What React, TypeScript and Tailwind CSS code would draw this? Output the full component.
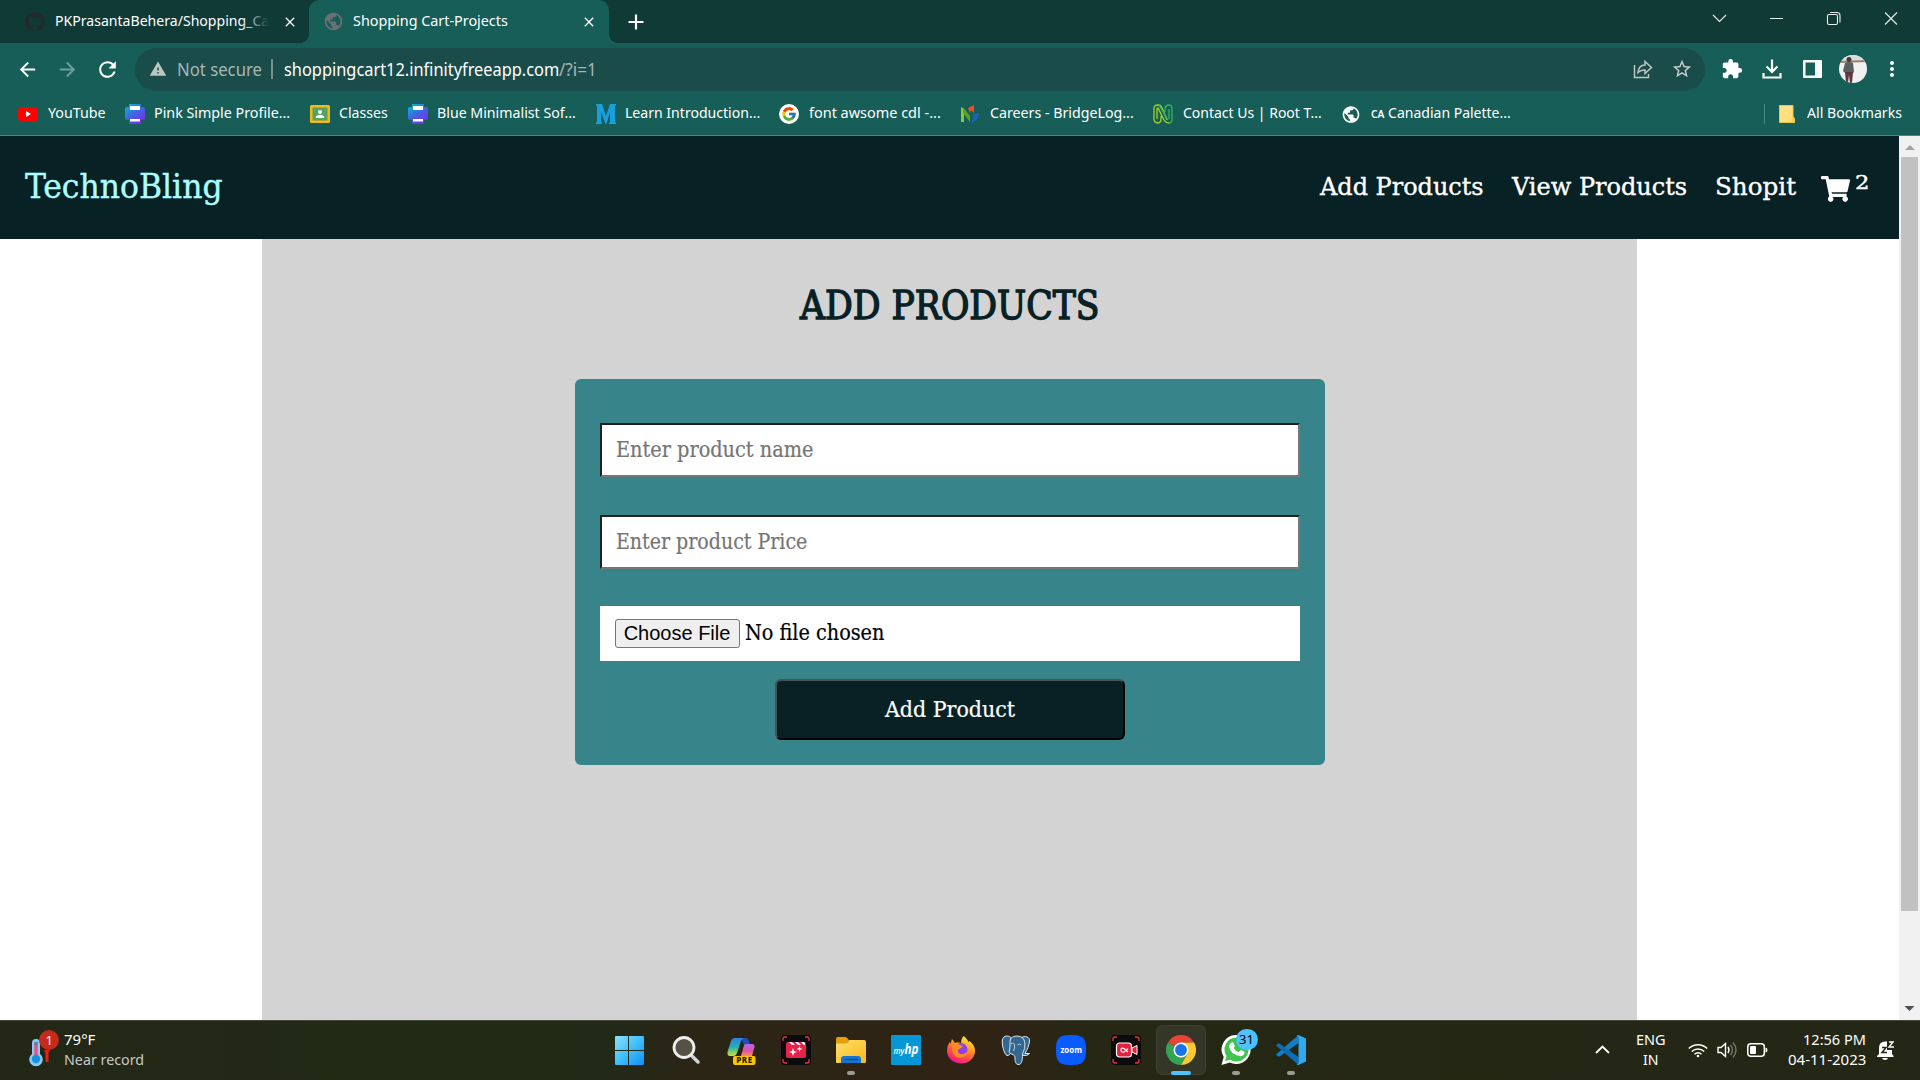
import { useLayoutEffect, useRef, type ReactNode } from "react";
import { FaGithub, FaShoppingCart } from "react-icons/fa";
import { FcGoogle } from "react-icons/fc";
import {
  MdArrowBack,
  MdArrowForward,
  MdClose,
  MdExtension,
  MdMoreVert,
  MdOutlineStarBorder,
  MdPublic,
  MdRefresh,
  MdWarning,
} from "react-icons/md";

/* One line of text whose glyphs are condensed or widened to fill its box. */
function Fit({ className, children }: { className: string; children: ReactNode }) {
  const ref = useRef<HTMLSpanElement>(null);
  useLayoutEffect(() => {
    const el = ref.current;
    if (!el || !el.parentElement) return;
    el.style.transform = `scaleX(${el.parentElement.clientWidth / el.offsetWidth})`;
  }, []);
  return (
    <span className={`block shrink-0 whitespace-nowrap ${className}`}>
      <span ref={ref} className="inline-block origin-left">
        {children}
      </span>
    </span>
  );
}

function TabStrip() {
  return (
    <div className="flex h-[43px] bg-[#0f3a36] text-[15px] leading-[38px] text-white">
      <div className="flex w-[309px] items-center pl-[25px]">
        <FaGithub className="size-5 shrink-0 text-[#24292f]" />
        <div className="relative ml-[10px] pb-[4px]">
          <Fit className="w-[214px]">PKPrasantaBehera/Shopping_Ca</Fit>
          <span className="absolute inset-y-0 right-0 w-7 bg-linear-to-r from-transparent to-[#0f3a36]" />
        </div>
        <MdClose className="ml-[13px] size-4 shrink-0" />
      </div>
      <div className="relative flex w-[300px] items-center rounded-t-[10px] bg-[#165e57] pl-[14px]">
        <span className="absolute bottom-0 -left-[10px] size-[10px] bg-[radial-gradient(circle_at_0_0,transparent_10px,#165e57_10.5px)]" />
        <span className="absolute -right-[10px] bottom-0 size-[10px] bg-[radial-gradient(circle_at_100%_0,transparent_10px,#165e57_10.5px)]" />
        <MdPublic className="size-[21px] shrink-0 text-[#6d6f73]" />
        <Fit className="ml-[9px] w-[155px] pb-[4px]">Shopping Cart-Projects</Fit>
        <MdClose className="ml-[73px] size-4 shrink-0" />
      </div>
      <div className="flex flex-1 items-center pl-[19px]">
        <svg className="size-4" viewBox="0 0 16 16" stroke="#fff" strokeWidth="2.2">
          <path d="M8 .5v15M.5 8h15" />
        </svg>
      </div>
      <svg className="mt-[10px] mr-[21px] h-4 w-[188px]" viewBox="0 0 188 16" fill="none" stroke="#e8eeed" strokeWidth="1.1">
        <path d="M2 5l6.5 6.5L15 5M59 8.5h13M174 2.5l12 12M186 2.5l-12 12" />
        <rect x="116.5" y="4.500" width="10" height="10" rx="1.500" />
        <path d="M119 2.500h7q3 0 3 3v7" />
      </svg>
    </div>
  );
}

function Toolbar() {
  return (
    <div className="flex h-[53px] items-center pb-[1px] text-white">
      <MdArrowBack className="ml-[16px] size-[23px]" />
      <MdArrowForward className="ml-[17px] size-[23px] text-[#6f9f9a]" />
      <MdRefresh className="ml-[16px] size-[25px]" />
      <div className="ml-[15px] flex h-[43px] w-[1570px] items-center rounded-full bg-[#1a4c49] pl-[14px] text-[17.5px]">
        <MdWarning className="size-[18px] text-[#bcc6c5]" />
        <Fit className="ml-[10px] w-[85px] text-[#a9b5b4]">Not secure</Fit>
        <span className="ml-[9px] h-5 w-[2px] bg-[#75918f]" />
        <Fit className="ml-[11px] w-[275px]">shoppingcart12.infinityfreeapp.com</Fit>
        <Fit className="w-[38px] text-[#a9b5b4]">/?i=1</Fit>
        <svg className="mr-[18px] ml-auto size-5" viewBox="0 0 20 20" fill="none" stroke="#bcc6c5" strokeWidth="1.500">
          <path d="M1.500 6v12.500h14V15" />
          <path d="M5 13.500c.5-5 3-7.500 7-7.500V2.500l6.500 6-6.500 6V11c-3 0-5 .5-7 2.500z" />
        </svg>
        <MdOutlineStarBorder className="mr-[12px] size-[22px] text-[#c6cfce]" />
      </div>
      <MdExtension className="ml-[16px] size-[22px]" />
      <svg className="ml-[19px] size-5" viewBox="0 0 20 20" fill="none" stroke="#fff" strokeWidth="2.200">
        <path d="M10 .5v12M4.500 7.500l5.500 5.500 5.500-5.500M1.500 14v4.500h17V14" />
      </svg>
      <svg className="ml-[21px] h-[18px] w-[19px]" viewBox="0 0 19 18" fill="#fff">
        <path fillRule="evenodd" d="M1 0h17q1 0 1 1v16q0 1-1 1H1q-1 0-1-1V1q0-1 1-1zM2.500 2.500v13H12v-13z" />
      </svg>
      <svg className="ml-[17px] size-7 rounded-full" viewBox="0 0 28 28">
        <rect width="28" height="28" fill="#f1f0f2" />
        <path d="M0 0h28v7H0z" fill="#d9dde2" />
        <path d="M0 6l28-1v2L0 8z" fill="#9c8069" />
        <circle cx="10" cy="4.500" r="2.500" fill="#4a3730" />
        <path d="M6 8q4-2 8 0l1 9-1 1H6l-2-2z" fill="#57605f" />
        <path d="M6 17h8l-1 11h-2l-1-8-1 8H7z" fill="#5d3440" />
      </svg>
      <MdMoreVert className="ml-[13px] size-6" />
    </div>
  );
}

function PrinterIcon() {
  return (
    <svg viewBox="0 0 20 20" className="size-5">
      <defs>
        <linearGradient id="printer" x1="0" y1="0" x2=".7" y2="1">
          <stop offset="0" stopColor="#00c4cc" />
          <stop offset=".5" stopColor="#3a6be0" />
          <stop offset="1" stopColor="#7d2ae8" />
        </linearGradient>
      </defs>
      <path d="M4 0h12v3h2q2 0 2 2v9q0 2-2 2h-2v4H4v-4H2q-2 0-2-2V5q0-2 2-2h2z" fill="url(#printer)" />
      <path d="M5 2h10v4H5zM5 15h10v2.500H5z" fill="#fff" />
    </svg>
  );
}

const bookmarks: { icon: ReactNode; label: ReactNode; width: string }[] = [
  {
    icon: (
      <svg viewBox="0 0 20 20" className="size-5">
        <rect y="3" width="20" height="14" rx="3.500" fill="#f00" />
        <path d="M8 7l5 3-5 3z" fill="#fff" />
      </svg>
    ),
    label: "YouTube",
    width: "w-[58px]",
  },
  { icon: <PrinterIcon />, label: "Pink Simple Profile...", width: "w-[136px]" },
  {
    icon: (
      <svg viewBox="0 0 20 20" className="size-5">
        <rect y="1" width="20" height="18" rx="1.500" fill="#f4b912" />
        <rect x="2.500" y="3.500" width="15" height="13" fill="#57a262" />
        <circle cx="10" cy="8" r="2" fill="#fff" />
        <path d="M5.500 14q0-3 4.500-3t4.500 3z" fill="#fff" />
      </svg>
    ),
    label: "Classes",
    width: "w-[49px]",
  },
  { icon: <PrinterIcon />, label: "Blue Minimalist Sof...", width: "w-[139px]" },
  {
    icon: (
      <svg viewBox="0 0 20 20" className="size-5">
        <path d="M0 0h6l4 12 4-12h6v1.500l-1 .5v16l1 .5V20h-7v-1.500l1-.5V8l-3.500 12h-1L5 8v10l1 .5V20H0v-1.500l1-.5V2l-1-.5z" fill="#189fdc" />
      </svg>
    ),
    label: "Learn Introduction...",
    width: "w-[135px]",
  },
  {
    icon: (
      <span className="flex size-5 items-center justify-center rounded-full bg-white">
        <FcGoogle className="size-4" />
      </span>
    ),
    label: "font awsome cdl -...",
    width: "w-[132px]",
  },
  {
    icon: (
      <svg viewBox="0 0 20 20" className="size-5">
        <path d="M1 3l3 2v13H1z" fill="#8cc63a" />
        <path d="M3 3l7 9v6L3 9z" fill="#4fa52d" />
        <path d="M8 4l6-3v8l-3-3-1 3z" fill="#f4511e" />
        <path d="M13 10l6-1q0 8-9 10l3-4z" fill="#1565b8" />
      </svg>
    ),
    label: "Careers - BridgeLog...",
    width: "w-[144px]",
  },
  {
    icon: (
      <svg viewBox="0 0 20 20" className="size-5" fill="none" strokeWidth="1.300">
        <path d="M1 16V4q0-3 4-3 3 0 4 3l5 12M4 15V5q0-1 1-1l6 12q2 3 5 3M1 16q1 3 4 3 3 0 3-4v-3" stroke="#a5d12e" />
        <path d="M19 4v12q0 3-3 3M16 5v10M12 8V4q1-3 4-3 3 0 3 4M6 1l9 15" stroke="#2fb35a" />
      </svg>
    ),
    label: "Contact Us | Root T...",
    width: "w-[139px]",
  },
  {
    icon: <MdPublic className="size-[21px] text-white" />,
    label: (
      <>
        <span className="text-[11px] leading-none font-semibold">CA</span> Canadian Palette...
      </>
    ),
    width: "w-[140px]",
  },
];

function BookmarksBar() {
  return (
    <div className="flex h-10 items-center border-b border-[#4b8a84] pb-[3px] pl-[18px] text-[15px] leading-5 text-white">
      <div className="flex gap-[19.4px]">
        {bookmarks.map((b, i) => (
          <div key={i} className="flex h-6 items-center gap-[9px]">
            <span className="flex w-5 shrink-0 justify-center">{b.icon}</span>
            <Fit className={`mb-[5px] ml-[.5px] h-5 ${b.width}`}>{b.label}</Fit>
          </div>
        ))}
      </div>
      <span className="mr-[14px] ml-auto h-5 w-px bg-[#4b8a84]" />
      <svg className="mr-[12px] h-[18px] w-4" viewBox="0 0 16 18">
        <path d="M.5.5h13.500v11l1.500 2v4H.5z" fill="#ffe082" stroke="#eac645" />
        <path d="M12.500 17.500v-5h2l1 2v3z" fill="#f3cf55" />
      </svg>
      <Fit className="mr-[18px] mb-[5px] h-5 w-[95px]">All Bookmarks</Fit>
    </div>
  );
}

function SiteHeader() {
  return (
    <header className="flex h-[103px] items-center bg-[#082125] pr-[30px] pl-[25px] text-[25px] leading-8 text-white [-webkit-text-stroke:.35px_currentColor]">
      <Fit className="mb-[1px] w-[197px] text-[33px] text-[#aaffff]">TechnoBling</Fit>
      <nav className="ml-auto flex items-center">
        <Fit className="mb-[1px] w-[164px]">Add Products</Fit>
        <Fit className="mb-[1px] ml-[28px] w-[175px]">View Products</Fit>
        <Fit className="mb-[1px] ml-[28px] w-[81px]">Shopit</Fit>
        <FaShoppingCart className="mt-[2px] ml-[25px] h-[26px] w-[29px]" />
        <Fit className="mb-[9px] ml-[5px] w-[14px] text-[18px] leading-5">2</Fit>
      </nav>
    </header>
  );
}

function ProductForm() {
  return (
    <form className="flex h-[386px] w-[750px] flex-col rounded-[6px] bg-[#37858b] px-[25px] pt-[44px] text-[22px] leading-8 [-webkit-text-stroke:.2px_currentColor]">
      <div className="flex h-[54px] items-center border-2 border-t-[#202020] border-r-[#767676] border-b-[#767676] border-l-[#202020] bg-white pl-[14px] text-[#757575]">
        <Fit className="w-[197px]">Enter product name</Fit>
      </div>
      <div className="mt-[38px] flex h-[54px] items-center border-2 border-t-[#202020] border-r-[#767676] border-b-[#767676] border-l-[#202020] bg-white pl-[14px] text-[#757575]">
        <Fit className="w-[191px]">Enter product Price</Fit>
      </div>
      <div className="mt-[37px] flex h-[55px] items-center bg-white pl-[15px] text-black">
        <button
          type="button"
          className="flex h-[29px] w-[125px] items-center justify-center rounded-[3px] border border-[#767676] bg-[#efefef] pb-[2px] font-['Liberation_Sans',sans-serif] text-[20px] leading-6 [-webkit-text-stroke:0]"
        >
          <Fit className="w-[107px]">Choose File</Fit>
        </button>
        <Fit className="mb-[2px] ml-[5px] w-[139px]">No file chosen</Fit>
      </div>
      <button
        type="button"
        className="mt-[18px] flex h-[61px] w-[350px] items-center justify-center self-center rounded-[6px] border-2 border-t-[#4d5052] border-r-black border-b-black border-l-[#4d5052] bg-[#082125] pr-[3px] text-white"
      >
        <Fit className="w-[130px]">Add Product</Fit>
      </button>
    </form>
  );
}

function Page() {
  return (
    <div className="flex h-[884px]">
      <div className="flex w-[1899px] flex-col bg-white font-['DejaVu_Serif_Condensed','DejaVu_Serif',serif]">
        <SiteHeader />
        <main className="ml-[262px] flex w-[1375px] flex-1 flex-col items-center bg-[#d3d3d3]">
          <h1 className="mb-[6px] text-[39px] leading-[134px] text-[#082125] [-webkit-text-stroke:1.3px_#082125]">
            <Fit className="w-[300px]">ADD PRODUCTS</Fit>
          </h1>
          <ProductForm />
        </main>
      </div>
      <div className="flex w-[21px] flex-col items-center bg-[#f1f1f1]">
        <svg className="h-[21px] w-[21px]" viewBox="0 0 21 21">
          <path d="M6 14h10l-5-5z" fill="#a3a3a3" />
        </svg>
        <div className="h-[754px] w-[17px] bg-[#c1c1c1]" />
        <svg className="mt-auto mb-[1px] h-[21px] w-[21px]" viewBox="0 0 21 21">
          <path d="M5.500 8h10l-5 5z" fill="#505050" />
        </svg>
      </div>
    </div>
  );
}

function WindowsIcon() {
  return (
    <svg viewBox="0 0 30 30" className="mr-[4px] size-[30px]">
      <defs>
        <linearGradient id="win" x1="0" y1="0" x2="1" y2="1">
          <stop offset="0" stopColor="#8be0ff" />
          <stop offset=".5" stopColor="#3fc0fb" />
          <stop offset="1" stopColor="#0f8ef5" />
        </linearGradient>
      </defs>
      <path d="M2 1h12v14H1V2q0-1 1-1zM15 1h14q1 0 1 1v13H15zM1 16h13v14H2q-1 0-1-1zM15 16h15v13q0 1-1 1H15z" fill="url(#win)" />
    </svg>
  );
}

function SearchIcon() {
  return (
    <svg viewBox="0 0 30 30" className="size-[30px]">
      <path d="M19 19l8 8" stroke="#cfd3d8" strokeWidth="3.500" strokeLinecap="round" />
      <circle cx="13" cy="12.500" r="10" fill="#565145" stroke="#eceef0" strokeWidth="2.800" />
    </svg>
  );
}

function CopilotIcon() {
  return (
    <svg viewBox="0 0 30 30" className="size-[30px] overflow-visible">
      <defs>
        <linearGradient id="copA" x1="0" y1="0" x2="0" y2="1">
          <stop offset="0" stopColor="#2f7fe8" />
          <stop offset=".5" stopColor="#22b0b0" />
          <stop offset="1" stopColor="#cfe03a" />
        </linearGradient>
        <linearGradient id="copB" x1="0" y1="0" x2="0" y2="1">
          <stop offset="0" stopColor="#b065f0" />
          <stop offset=".6" stopColor="#e0559c" />
          <stop offset="1" stopColor="#f6925e" />
        </linearGradient>
      </defs>
      <path d="M15 3h5q2 0 2.500 2l1.500 5h-6z" fill="#2350b8" />
      <path d="M9 3h9q-2 0-3 3l-4 12q-1 3-3 3H4q-3 0-2.500-4L5 6q1-3 4-3z" fill="url(#copA)" />
      <path d="M20 9h6q3 0 2.500 3L26 21H15l2.500-9q.5-3 2.500-3z" fill="url(#copB)" />
      <rect x="7" y="21" width="22.500" height="9" rx="2" fill="#fdc500" />
      <text x="18.200" y="28.400" textAnchor="middle" textLength="16" fontSize="8" fontWeight="800" fontFamily="Noto Sans" fill="#221c00">
        PRE
      </text>
    </svg>
  );
}

function Corners() {
  return (
    <>
      <rect width="30" height="30" rx="4" fill="#0b0b0d" />
      <path d="M2 6V4q0-2 2-2h2M24 2h2q2 0 2 2v2M28 24v2q0 2-2 2h-2M6 28H4q-2 0-2-2v-2" fill="none" stroke="#f0323c" strokeWidth="1.300" />
    </>
  );
}

function ClipIcon() {
  return (
    <svg viewBox="0 0 30 30" className="size-[30px]">
      <Corners />
      <rect x="5" y="7" width="20" height="16" rx="2" fill="#e6214b" />
      <path d="M8 7l3 3h3l-3-3zM14 7l3 3h3l-3-3zM20 7l3 3h1V8l-1-1z" fill="#fff" />
      <path d="M12 13l1 3 3 1-3 1-1 3-1-3-3-1 3-1zM18.500 11l.8 2.200 2.200.8-2.200.8-.8 2.200-.8-2.200-2.200-.8 2.200-.8z" fill="#fff" />
    </svg>
  );
}

function FolderIcon() {
  return (
    <svg viewBox="0 0 30 30" className="size-[30px]">
      <defs>
        <linearGradient id="fold" x1="0" y1="0" x2="1" y2="1">
          <stop offset="0" stopColor="#ffdf70" />
          <stop offset="1" stopColor="#f9b916" />
        </linearGradient>
      </defs>
      <path d="M0 10V4q0-2 2-2h8l3 3h6v5z" fill="#e3a008" />
      <path d="M0 8.500h11L14 5h14q2 0 2 2v20q0 1-1 1H1q-1 0-1-1z" fill="url(#fold)" />
      <path d="M5 28v-4q0-3 3-3h14q3 0 3 3v4z" fill="#1673cf" />
      <path d="M8.500 24.500h13" stroke="#0b4b92" strokeWidth="1.200" />
    </svg>
  );
}

function MyHpIcon() {
  return (
    <svg viewBox="0 0 30 30" className="size-[30px] overflow-visible">
      <rect width="30" height="30" rx="1" fill="#0596d6" />
      <text x="15" y="18.500" textAnchor="middle" fontStyle="italic" fontFamily="Open Sans" fill="#fff" textLength="25" lengthAdjust="spacingAndGlyphs">
        <tspan fontSize="9.500" fontWeight="600">
          my
        </tspan>
        <tspan fontSize="14" fontWeight="700">
          hp
        </tspan>
      </text>
    </svg>
  );
}

function FirefoxIcon() {
  return (
    <svg viewBox="0 0 30 30" className="size-[30px]">
      <defs>
        <linearGradient id="fx" x1=".8" y1="0" x2=".3" y2="1">
          <stop offset="0" stopColor="#fff04f" />
          <stop offset=".35" stopColor="#ffa51f" />
          <stop offset=".7" stopColor="#ff4a4a" />
          <stop offset="1" stopColor="#e2178f" />
        </linearGradient>
      </defs>
      <path d="M17.500 1c3 2 4 4 5 6l1-1c4 3 6 7 5.500 11C28 24 22.500 28.500 15 28.500S1 23 1 16c0-4 1-7 3-9l.5 2L6 4l3 4c3-1 5 0 6 0 0-3 1-5 2.500-7z" fill="url(#fx)" />
      <circle cx="15" cy="14.500" r="6.500" fill="#8a45e8" />
      <path d="M7 9c3-1 5 0 7 1l3 1c-1 2-3 2-4 3-2 1-1 4 1 5 3 1 5-1 7-2-1 5-5 6-8 5.500-5-.5-8-5-6-13.500z" fill="#ff8a1f" />
    </svg>
  );
}

function ElephantIcon() {
  return (
    <svg viewBox="0 0 30 30" className="size-[30px]" fill="#336791" stroke="#dfe8ee" strokeWidth="1" strokeLinejoin="round">
      <path d="M20 3c4-3 9-1 8.500 3-.3 4-2.500 9-4.500 12.500h4.500c-1.500 2-5 2.500-7.500 1.500z" />
      <path d="M10 2.500C6-.500 1 1 1.200 7c.2 5 2.300 12.500 4.800 13.500 1.500.5 2.800-1.500 4.500-3z" />
      <path d="M9.500 4c1.500-3 8-4 11.500-1.500s3 8 2.500 11c-.5 2.500-2 4-2 6.500 0 4-.5 9-3.500 9.500-3.500.3-4-3-4-6.500 0-2-1-3.500-3.500-4-2.500-.8-2.500-2-2-4 1-3 0-8 1-11z" />
      <path d="M10 9q3-2 3.500 1t-1 6M20 10q-2-2-3.500 0" fill="none" strokeWidth=".8" />
    </svg>
  );
}

function ZoomIcon() {
  return (
    <svg viewBox="0 0 30 30" className="size-[30px]">
      <path d="M15 0c12 0 15 3 15 15s-3 15-15 15S0 27 0 15 3 0 15 0z" fill="#0b5cff" />
      <text x="4.500" y="17.500" fontSize="8.500" fontWeight="700" fontFamily="Open Sans" fill="#fff" textLength="21.500" lengthAdjust="spacingAndGlyphs">
        zoom
      </text>
    </svg>
  );
}

function RecorderIcon() {
  return (
    <svg viewBox="0 0 30 30" className="size-[30px]">
      <Corners />
      <rect x="5.500" y="8" width="15" height="14" rx="3" fill="#e6213f" stroke="#fff" strokeWidth="1.200" />
      <path d="M21 13l5-2.500v9L21 17z" fill="#e6213f" stroke="#fff" strokeWidth="1" />
      <path d="M17 17l-4-3.500q-3-1-3 1.500t3 2l4-3.500" fill="none" stroke="#fff" strokeWidth="1.300" />
    </svg>
  );
}

function ChromeIcon() {
  return (
    <svg viewBox="0 0 48 48" className="size-[30px]">
      <path d="M24 24L3.200 12A24 24 0 0 1 44.800 12H24z" fill="#ea4335" />
      <path d="M24 24L3.200 12A24 24 0 0 0 24 48l10.400-18z" fill="#34a353" />
      <path d="M24 12h20.800A24 24 0 0 1 24 48l10.400-18z" fill="#fcc934" />
      <circle cx="24" cy="24" r="12" fill="#fff" />
      <circle cx="24" cy="24" r="9.500" fill="#1a73e8" />
    </svg>
  );
}

function WhatsAppIcon() {
  return (
    <span className="relative block size-[30px]">
      <svg viewBox="0 0 30 30" className="size-[30px]">
        <path d="M15.500 0a14.500 14.500 0 1 1-6.800 27.500L.5 30l2.200-8A14.500 14.500 0 0 1 15.500 0z" fill="#fff" />
        <path d="M15.500 2.500a12 12 0 1 1-6.300 22.200L4 26l1.500-5A12 12 0 0 1 15.500 2.500z" fill="#3fc351" />
        <path d="M10.500 7.500q1.500-.8 2.200.8l1 2.400q.2.800-1 2.200 2 3.300 5 4.300l1.500-1.700q.5-.5 1.200-.2l2.700 1.300q.8.400.4 1.600-1.200 3.300-4.500 3-9.500-2-11-9.500 0-2.700 2.500-4.200z" fill="#fff" />
      </svg>
      <span className="absolute -top-[6px] left-[15px] flex h-[21px] w-[22px] items-center justify-center rounded-full bg-[#4cc2ff] text-[13px] leading-none text-black">
        31
      </span>
    </span>
  );
}

function CodeIcon() {
  return (
    <svg viewBox="0 0 30 30" className="size-[30px]">
      <path d="M22.500 0L0 19.500l2 2h1.500L22.500 8z" fill="#0f7fc9" />
      <path d="M22.500 30L0 10.500l2-2h1.500L22.500 22z" fill="#0a6db5" />
      <path d="M22.500 0L30 3.500v23L22.500 30q-1.500 0-2-1 2 .5 2-1.500V2.500q0-2-2-1.500.5-1 2-1z" fill="#31a8f0" />
    </svg>
  );
}

const apps: { icon: ReactNode; state?: "open" | "active" }[] = [
  { icon: <WindowsIcon /> },
  { icon: <SearchIcon /> },
  { icon: <CopilotIcon /> },
  { icon: <ClipIcon /> },
  { icon: <FolderIcon />, state: "open" },
  { icon: <MyHpIcon /> },
  { icon: <FirefoxIcon /> },
  { icon: <ElephantIcon /> },
  { icon: <ZoomIcon /> },
  { icon: <RecorderIcon /> },
  { icon: <ChromeIcon />, state: "active" },
  { icon: <WhatsAppIcon />, state: "open" },
  { icon: <CodeIcon />, state: "open" },
];

function Taskbar() {
  return (
    <footer className="flex h-[60px] items-center border-t border-[#46493a] bg-[linear-gradient(90deg,#242716_0%,#232816_14%,#202b15_22%,#212a16_31%,#2b2516_36%,#2f2315_52%,#262715_57%,#242716_100%)] pb-[2px] text-[15px] leading-5 text-white">
      <div className="flex w-[603px] items-center pl-[28px]">
        <svg className="h-10 w-8" viewBox="0 0 32 40">
          <path d="M4 13a4 4 0 0 1 8 0v11a6.800 6.800 0 1 1-8 0z" fill="#8cc8f5" />
          <path d="M6.300 13.500a1.700 1.700 0 0 1 3.400 0V27H6.300z" fill="#e8507a" />
          <path d="M6.300 12h3.400v3H6.300z" fill="#5f7f9f" />
          <circle cx="8" cy="29" r="4.200" fill="#1490df" />
          <path d="M16.500 20h5v2h-1v10h-3V22h-1z" fill="#f01c0c" />
          <circle cx="21" cy="10" r="10" fill="#c42b1c" />
          <text x="21.300" y="14.800" textAnchor="middle" fontSize="13" fontFamily="Noto Sans" fill="#fff">
            1
          </text>
        </svg>
        <div className="mb-[2px] ml-[4px]">
          <Fit className="w-[31px]">79°F</Fit>
          <Fit className="w-[80px] text-[#c8c9c4]">Near record</Fit>
        </div>
      </div>
      <div className="flex">
        {apps.map((a, i) => (
          <div key={i} className="flex w-[55px] justify-center">
            <div
              className={
                a.state === "active"
                  ? "relative flex size-[50px] items-center justify-center rounded-[6px] border border-[#3d4032] bg-[#343728]"
                  : "relative flex size-[50px] items-center justify-center"
              }
            >
              {a.icon}
              {a.state === "open" && <span className="absolute bottom-0 h-1 w-2 rounded-full bg-[#9b9c93]" />}
              {a.state === "active" && <span className="absolute -bottom-px h-1 w-5 rounded-full bg-[#4cc2ff]" />}
            </div>
          </div>
        ))}
      </div>
      <div className="ml-auto flex items-center pr-[25px]">
        <svg className="mr-[26px] h-[9px] w-[15px]" viewBox="0 0 15 9" fill="none" stroke="#fff" strokeWidth="1.800">
          <path d="M1 8l6.500-6.500L14 8" />
        </svg>
        <div className="mr-[22px] mb-[1px] flex w-[30px] flex-col items-center">
          <Fit className="w-[30px]">ENG</Fit>
          <Fit className="w-[16px]">IN</Fit>
        </div>
        <svg className="mr-[9px] h-4 w-5" viewBox="0 0 20 16" fill="none" stroke="#fff" strokeWidth="1.500">
          <path d="M.8 6.500a13 13 0 0 1 18.400 0M3.800 9.500a8.800 8.800 0 0 1 12.400 0M6.500 12.300a5 5 0 0 1 7 0" />
          <circle cx="10" cy="14" r="1.300" fill="#fff" stroke="none" />
        </svg>
        <svg className="mr-[9px] h-[18px] w-[21px]" viewBox="0 0 21 18" fill="none" stroke="#fff" strokeWidth="1.400">
          <path d="M1 6.500h3L8.500 2.500v13L4 11.500H1zM11 6q2 3 0 6" />
          <path d="M13.500 4q4 5 0 10M16 1.500q6 7.500 0 15" stroke="#73766a" />
        </svg>
        <svg className="mr-[20px] h-[14px] w-[21px]" viewBox="0 0 21 14" fill="none">
          <rect x=".8" y=".8" width="16.500" height="12.400" rx="3" stroke="#fff" strokeWidth="1.500" />
          <rect x="3" y="3" width="6" height="8" rx="1" fill="#fff" />
          <path d="M18.500 4.500q2 0 2 2.500t-2 2.500z" fill="#fff" />
        </svg>
        <div className="mr-[11px] mb-[2px] flex flex-col items-end">
          <Fit className="w-[63px]">12:56 PM</Fit>
          <Fit className="w-[78px]">04-11-2023</Fit>
        </div>
        <svg className="h-5 w-[18px]" viewBox="0 0 18 20">
          <path d="M2 14V8q0-6.500 6-6.500h2V10h5v4l1.500 2v1H0v-1zM5 18h6q-.5 2-3 2t-3-2z" fill="#fff" />
          <path d="M5 7.500h4l-4 5h5" fill="none" stroke="#242716" strokeWidth="1.500" />
          <path d="M12 2h4l-4 5h5" fill="none" stroke="#fff" strokeWidth="1.400" />
        </svg>
      </div>
    </footer>
  );
}

export default function App() {
  return (
    <div className="flex h-[1080px] w-[1920px] flex-col overflow-hidden bg-[#165e57] font-['Noto_Sans',sans-serif]">
      <TabStrip />
      <Toolbar />
      <BookmarksBar />
      <Page />
      <Taskbar />
    </div>
  );
}
